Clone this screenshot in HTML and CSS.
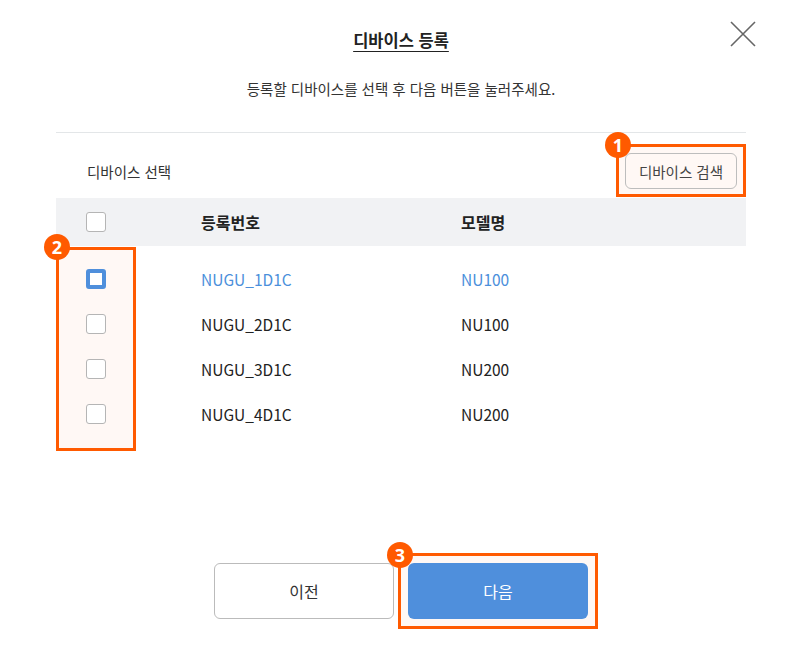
FILE: index.html
```html
<!DOCTYPE html>
<html lang="ko">
<head>
<meta charset="utf-8">
<title>디바이스 등록</title>
<link rel="stylesheet" href="styles.css">
</head>
<body>
<div class="modal">
  <header class="modal-head">
    <h1 class="title">디바이스 등록</h1>
    <button class="close" aria-label="닫기">
      <svg width="28" height="28" viewBox="0 0 28 28"><path d="M2 2 L26 26 M26 2 L2 26" stroke="#666" stroke-width="1.6" fill="none"/></svg>
    </button>
    <p class="subtitle">등록할 디바이스를 선택 후 다음 버튼을 눌러주세요.</p>
  </header>
  <div class="divider"></div>
  <div class="toolbar">
    <span class="label">디바이스 선택</span>
    <div class="mark-wrap">
      <button class="search-btn">디바이스 검색</button>
      <div class="mark mark-1"><span class="badge">1</span></div>
    </div>
  </div>
  <div class="table">
    <div class="head">
      <span class="cell"><span class="check"></span></span>
      <span class="cell">등록번호</span>
      <span class="cell">모델명</span>
    </div>
    <div class="body">
      <div class="row active">
        <span class="cell"><span class="check on"></span></span>
        <span class="cell">NUGU_1D1C</span>
        <span class="cell">NU100</span>
      </div>
      <div class="row">
        <span class="cell"><span class="check"></span></span>
        <span class="cell">NUGU_2D1C</span>
        <span class="cell">NU100</span>
      </div>
      <div class="row">
        <span class="cell"><span class="check"></span></span>
        <span class="cell">NUGU_3D1C</span>
        <span class="cell">NU200</span>
      </div>
      <div class="row">
        <span class="cell"><span class="check"></span></span>
        <span class="cell">NUGU_4D1C</span>
        <span class="cell">NU200</span>
      </div>
      <div class="mark mark-2"><span class="badge">2</span></div>
    </div>
  </div>
  <div class="actions">
    <button class="btn prev">이전</button>
    <div class="mark-wrap">
      <button class="btn next">다음</button>
      <div class="mark mark-3"><span class="badge">3</span></div>
    </div>
  </div>
</div>
</body>
</html>
```
FILE: styles.css
```css
* { box-sizing: border-box; }
html, body { margin: 0; padding: 0; background: #fff; }
body {
  font-family: "Noto Sans CJK KR", "Noto Sans", sans-serif;
  color: #222;
  padding-bottom: 30px;
}
button { font-family: inherit; cursor: pointer; }

.modal {
  width: 690px;
  margin-left: 56px;
}

.modal-head {
  position: relative;
  padding-top: 28px;
  text-align: center;
}
.title {
  margin: 0;
  font-size: 16.5px;
  line-height: 24px;
  font-weight: 700;
  color: #222;
  text-decoration: underline;
  text-underline-offset: 4px;
  text-decoration-thickness: 1px;
}
.close {
  position: absolute;
  top: 20px;
  right: -11px;
  width: 28px;
  height: 28px;
  padding: 0;
  border: 0;
  background: none;
}
.close svg { display: block; }
.subtitle {
  margin: 27px 0 0;
  font-size: 14.5px;
  line-height: 20px;
  color: #333;
}
.divider {
  margin-top: 33px;
  height: 1px;
  background: #e3e6e8;
}

.toolbar {
  height: 65px;
  display: flex;
  align-items: center;
  justify-content: space-between;
  padding: 11px 9px 0 31px;
}
.label { font-size: 14.5px; color: #333; }

.mark-wrap { position: relative; }
.search-btn {
  position: relative;
  z-index: 1;
  display: block;
  height: 36px;
  padding: 0 13px;
  font-size: 14.5px;
  color: #444;
  background: #fff8f5;
  border: 1px solid #bdbdbd;
  border-radius: 6px;
}

.mark {
  position: absolute;
  border: 3px solid #ff5a00;
  background: #fff8f5;
}
.mark-1 { inset: -9px -9px -8px -9px; }
.mark-2 { left: 0; top: 1px; width: 80px; bottom: -6px; }
.mark-3 { inset: -10px; }
.badge {
  position: absolute;
  left: -14px;
  top: -15px;
  width: 26px;
  height: 26px;
  border-radius: 50%;
  background: #ff5a00;
  color: #fff;
  font-family: "Noto Sans", sans-serif;
  font-weight: 700;
  font-size: 18px;
  line-height: 26px;
  text-align: center;
}
.mark-2 .badge { left: -15px; top: -16px; }
.mark-3 .badge { left: -14px; top: -14px; }

.table { font-size: 15.5px; }
.head, .row {
  display: grid;
  grid-template-columns: 145px 260px 1fr;
  align-items: center;
}
.cell:first-child { padding-left: 30px; display: flex; }
.head {
  height: 48px;
  background: #f1f2f4;
  font-weight: 700;
  font-size: 16px;
  color: #222;
}
.body {
  position: relative;
  padding: 10px 0 9px;
}
.row {
  height: 45px;
  position: relative;
  z-index: 1;
}
.active { color: #4b8fdb; }

.check {
  display: block;
  width: 20px;
  height: 20px;
  border: 1px solid #b5b5b5;
  border-radius: 3px;
  background: #fff;
}
.check.on {
  border: 4px solid #4f8fdc;
  border-radius: 3px;
}

.actions {
  margin-top: 118px;
  display: flex;
  justify-content: center;
  gap: 14px;
}
.btn {
  width: 180px;
  height: 56px;
  font-size: 16px;
  border-radius: 6px;
}
.prev {
  background: #fff;
  border: 1px solid #bbb;
  color: #333;
}
.next {
  position: relative;
  z-index: 1;
  display: block;
  background: #4f8fdc;
  border: 0;
  color: #fff;
}
```
